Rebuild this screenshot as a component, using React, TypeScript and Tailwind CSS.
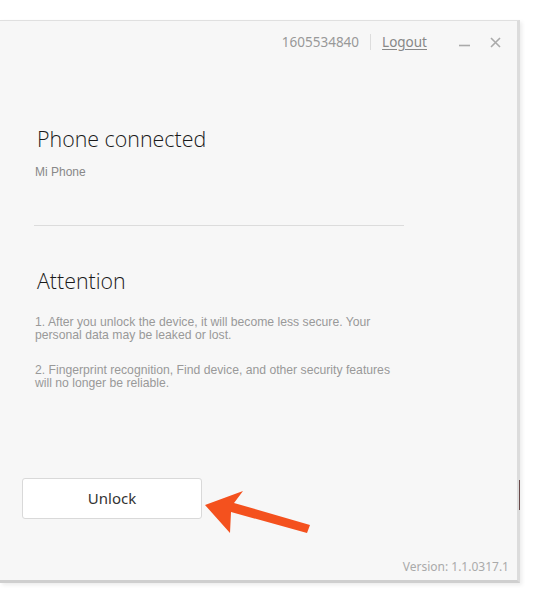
export default function App() {
  return (
    <div className="relative w-[536px] h-[598px] bg-white pt-[20px] overflow-hidden" style={{ fontFamily: '"Noto Sans", "Open Sans", sans-serif' }}>
      <div className="relative w-[520px] h-[563px] bg-[#f7f7f7] border-t border-[#e0e0e0] border-r-[3px] border-r-[#dcdcdc] border-b-[3px] border-b-[#cfcfcf] shadow-[2px_2px_4px_rgba(0,0,0,0.08)] flex flex-col">
        <div className="h-[42px] flex items-center justify-end pr-[16px] text-[13.5px]">
          <span className="text-[#999]">1605534840</span>
          <span className="mx-[11px] h-[16px] w-px bg-[#ddd]"></span>
          <span className="text-[#888] underline underline-offset-2">Logout</span>
          <div className="ml-[32px] flex items-center gap-[20px] text-[#aaa]">
            <svg width="11" height="11" viewBox="0 0 11 11"><path d="M0 8.5 H11" stroke="#aaa" strokeWidth="1.6" /></svg>
            <svg width="11" height="11" viewBox="0 0 11 11"><path d="M1 1 L10 10 M10 1 L1 10" stroke="#aaa" strokeWidth="1.6" /></svg>
          </div>
        </div>
        <div className="pl-[37px] pt-[61px]">
          <div className="text-[21.4px] leading-[30px] text-[#1a1a1a] font-light" style={{ fontFamily: '"Open Sans", "Noto Sans", sans-serif' }}>Phone connected</div>
          <div className="mt-[9px] text-[12px] text-[#888] -ml-[2px]" style={{ fontFamily: '"Liberation Sans", Arial, sans-serif' }}>Mi Phone</div>
          <div className="mt-[44px] w-[370px] h-px bg-[#dcdcdc] -ml-[3px]"></div>
          <div className="mt-[40px] text-[21.4px] leading-[30px] text-[#1a1a1a] font-light" style={{ fontFamily: '"Open Sans", "Noto Sans", sans-serif' }}>Attention</div>
          <div className="mt-[20px] -ml-[2px] w-[366px] text-[12.2px] leading-[13px] text-[#999]" style={{ fontFamily: '"Liberation Sans", Arial, sans-serif' }}>
            <p>1. After you unlock the device, it will become less secure. Your personal data may be leaked or lost.</p>
            <p className="mt-[22px]">2. Fingerprint recognition, Find device, and other security features will no longer be reliable.</p>
          </div>
        </div>
        <div className="pl-[22px] mt-[88px]">
          <div className="w-[180px] h-[41px] bg-white border border-[#d9d9d9] rounded-[3px] flex items-center justify-center text-[15px] text-[#333]">Unlock</div>
        </div>
        <div className="mt-auto pb-[4px] pr-[8px] text-right text-[12px] text-[#aaa]">Version: 1.1.0317.1</div>
      </div>
      <div className="absolute left-[519px] top-[480px] w-px h-[30px] bg-[#6a4a4a]"></div>
      <svg className="absolute left-0 top-0" width="536" height="598" viewBox="0 0 536 598">
        <path d="M205 505 L243 491 L234 503 L310 525 L307 533 L231 512 L230 533 Z" fill="#f4511e" />
      </svg>
    </div>
  );
}
